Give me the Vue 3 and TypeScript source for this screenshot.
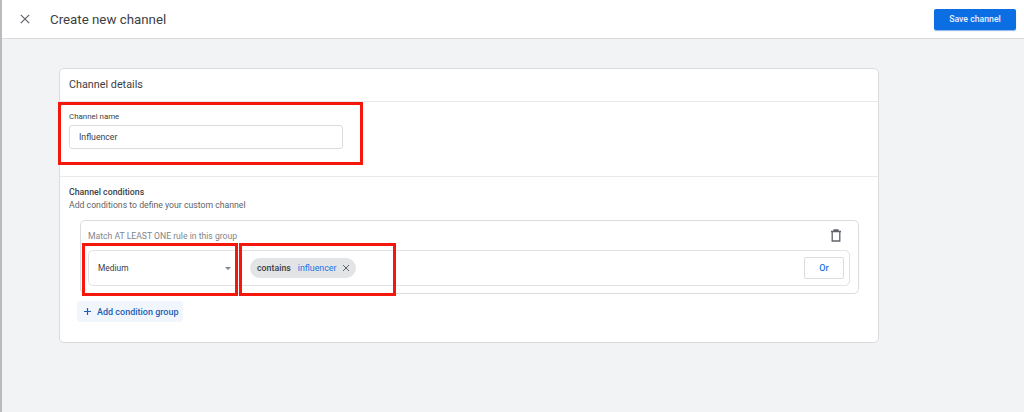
<script setup lang="ts">
const title: string = 'Create new channel'
</script>

<template>
  <div class="page">
    <header class="top">
      <div class="top-left">
        <svg class="close" width="12" height="12" viewBox="0 0 12 12"><path d="M1.8 1.8l8.4 8.4M10.2 1.8l-8.4 8.4" stroke="#5f6368" stroke-width="1.2" fill="none" /></svg>
        <h1>{{ title }}</h1>
      </div>
      <button class="save">Save channel</button>
    </header>
    <main class="body">
      <section class="card">
        <div class="card-head">Channel details</div>
        <div class="name-sec">
          <label>Channel name</label>
          <div class="input">Influencer</div>
        </div>
        <div class="cond-sec">
          <div class="cond-title">Channel conditions</div>
          <div class="cond-sub">Add conditions to define your custom channel</div>
          <div class="group">
            <div class="group-head">
              <span>Match AT LEAST ONE rule in this group</span>
              <svg width="12" height="13" viewBox="0 0 12 13"><path d="M2.2 3v9h7.6V3M1 2.5h10M4 2.5V1h4v1.5" stroke="#5f6368" stroke-width="1.3" fill="none" /></svg>
            </div>
            <div class="rule">
              <div class="select">
                <span>Medium</span>
                <i class="caret"></i>
              </div>
              <div class="values">
                <div class="chip">
                  <b>contains</b>
                  <span class="val">influencer</span>
                  <svg width="8" height="8" viewBox="0 0 8 8"><path d="M1 1l6 6M7 1L1 7" stroke="#5f6368" stroke-width="1" fill="none" /></svg>
                </div>
                <button class="or">Or</button>
              </div>
            </div>
          </div>
          <button class="add">
            <svg width="9" height="9" viewBox="0 0 9 9"><path d="M4.5 1v7M1 4.5h7" stroke="#1a5fb4" stroke-width="1.2" fill="none" /></svg>
            <span>Add condition group</span>
          </button>
        </div>
      </section>
    </main>
    <div class="mark m1"></div>
    <div class="mark m2"></div>
    <div class="mark m3"></div>
  </div>
</template>

<style>
html, body { margin: 0; background: #f1f3f4; }
</style>

<style scoped>
.page {
  position: relative;
  width: 1024px;
  height: 412px;
  overflow: hidden;
  box-sizing: border-box;
  border-left: 2px solid #b9bbbe;
  font-family: Roboto, "Liberation Sans", sans-serif;
  color: #3c4043;
  background: #f1f3f4;
}
.top {
  height: 38px;
  background: #fff;
  border-bottom: 1px solid #dadce0;
  display: flex;
  align-items: center;
  justify-content: space-between;
  padding: 0 8px 0 17px;
}
.top-left { display: flex; align-items: center; gap: 19px; }
.close { display: block; }
h1 { margin: 0; font-size: 13.3px; font-weight: 400; color: #3c4043; }
.save {
  width: 82px;
  height: 21px;
  border: 0;
  border-radius: 2px;
  background: #0b6fe3;
  color: #e8f0fe;
  font: 500 8.7px Roboto, sans-serif;
  box-shadow: 0 1px 1px #8ab4e8;
  padding: 0;
}
.body { padding: 29px 0 0 57px; }
.card {
  width: 820px;
  height: 275px;
  box-sizing: border-box;
  background: #fff;
  border: 1px solid #dadce0;
  border-radius: 5px;
}
.card-head {
  height: 32px;
  line-height: 32px;
  padding-left: 9px;
  font-size: 10.8px;
  border-bottom: 1px solid #e8eaed;
}
.name-sec {
  height: 75px;
  box-sizing: border-box;
  padding: 10px 0 0 9px;
  border-bottom: 1px solid #e8eaed;
}
label { display: block; font-size: 7.9px; line-height: 10px; color: #3c4043; }
.input {
  width: 274px;
  height: 24px;
  margin-top: 3px;
  box-sizing: border-box;
  border: 1px solid #dadce0;
  border-radius: 3px;
  padding-left: 9px;
  font-size: 8.7px;
  line-height: 22px;
}
.cond-sec { padding: 10px 0 0 9px; }
.cond-title { font-size: 8.75px; font-weight: 500; line-height: 10px; color: #3c4043; }
.cond-sub { font-size: 8.7px; line-height: 12px; margin-top: 2px; color: #5f6368; }
.group {
  width: 779px;
  height: 74px;
  margin: 9px 0 0 11px;
  box-sizing: border-box;
  border: 1px solid #dadce0;
  border-radius: 5px;
  padding: 0 8px 0 7px;
}
.group-head {
  height: 29px;
  display: flex;
  align-items: center;
  justify-content: space-between;
  padding-right: 8px;
  font-size: 8.65px;
  color: #80868b;
}
.rule {
  height: 36px;
  box-sizing: border-box;
  border: 1px solid #e0e2e5;
  border-radius: 5px;
  display: flex;
}
.select {
  width: 147px;
  display: flex;
  align-items: center;
  justify-content: space-between;
  padding: 0 4px 0 9px;
  box-sizing: border-box;
  font-size: 8.4px;
  border-right: 1px solid #e0e2e5;
}
.caret {
  width: 0;
  height: 0;
  border-left: 3px solid transparent;
  border-right: 3px solid transparent;
  border-top: 3px solid #80868b;
}
.values {
  flex: 1;
  display: flex;
  align-items: center;
  justify-content: space-between;
  padding: 0 5px 0 14px;
}
.chip {
  height: 20px;
  width: 106px;
  box-sizing: border-box;
  background: #e3e4e6;
  border-radius: 10px;
  display: flex;
  align-items: center;
  padding-left: 7px;
  font-size: 8.8px;
}
.chip b { font-weight: 500; color: #3c4043; }
.val { color: #1a73e8; margin-left: 7px; margin-right: 6px; }
.or {
  width: 40px;
  height: 22px;
  background: #fff;
  border: 1px solid #dadce0;
  border-radius: 2px;
  color: #1a73e8;
  font: 500 9px Roboto, sans-serif;
  padding: 0;
}
.add {
  margin: 7px 0 0 8px;
  width: 106px;
  height: 21px;
  border: 0;
  border-radius: 3px;
  background: #f1f6fd;
  display: flex;
  align-items: center;
  gap: 5px;
  padding: 0 0 0 6px;
  color: #1a5fb4;
  font: 500 9px Roboto, sans-serif;
}
.mark {
  position: absolute;
  box-sizing: border-box;
  border: 3px solid #f5160c;
  pointer-events: none;
}
.m1 { left: 56px; top: 102px; width: 305px; height: 63px; }
.m2 { left: 80px; top: 243px; width: 156px; height: 53px; }
.m3 { left: 237px; top: 243px; width: 157px; height: 53px; }
</style>
